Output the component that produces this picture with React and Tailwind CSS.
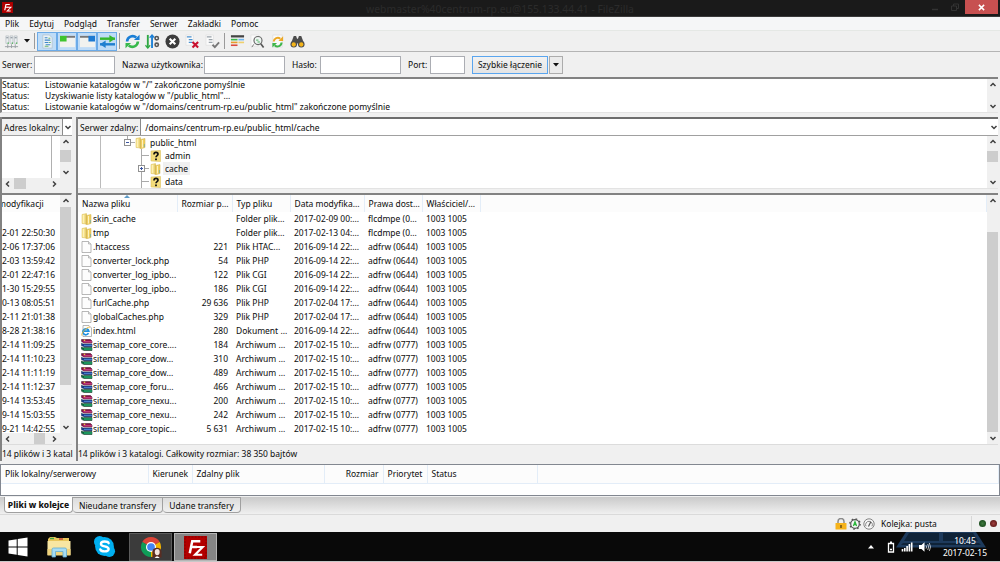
import React from 'react';

const menus = ['Plik', 'Edytuj', 'Podgląd', 'Transfer', 'Serwer', 'Zakładki', 'Pomoc'];

const logs = [
  'Listowanie katalogów w "/" zakończone pomyślnie',
  'Uzyskiwanie listy katalogów w "/public_html"...',
  'Listowanie katalogów w "/domains/centrum-rp.eu/public_html" zakończone pomyślnie',
];

const localDates = [
  '', '2-01 22:50:30', '2-06 17:37:06', '2-03 13:59:42', '2-01 22:47:16', '1-30 15:29:55',
  '0-13 08:05:51', '2-11 21:01:38', '8-28 21:38:16', '2-14 11:09:25', '2-14 11:10:23',
  '2-14 11:11:19', '2-14 11:12:37', '9-14 13:53:45', '9-14 15:03:55', '9-21 14:42:55',
];

const files = [
  ['folder', 'skin_cache', '', 'Folder plik...', '2017-02-09 00:...', 'flcdmpe (0...'],
  ['folder', 'tmp', '', 'Folder plik...', '2017-02-13 04:...', 'flcdmpe (0...'],
  ['file', '.htaccess', '221', 'Plik HTAC...', '2016-09-14 22:...', 'adfrw (0644)'],
  ['file', 'converter_lock.php', '54', 'Plik PHP', '2016-09-14 22:...', 'adfrw (0644)'],
  ['file', 'converter_log_ipbo...', '122', 'Plik CGI', '2016-09-14 22:...', 'adfrw (0644)'],
  ['file', 'converter_log_ipbo...', '186', 'Plik CGI', '2016-09-14 22:...', 'adfrw (0644)'],
  ['file', 'furlCache.php', '29 636', 'Plik PHP', '2017-02-04 17:...', 'adfrw (0644)'],
  ['file', 'globalCaches.php', '329', 'Plik PHP', '2017-02-04 17:...', 'adfrw (0644)'],
  ['html', 'index.html', '280', 'Dokument ...', '2016-09-14 22:...', 'adfrw (0644)'],
  ['rar', 'sitemap_core_core....', '184', 'Archiwum ...', '2017-02-15 10:...', 'adfrw (0777)'],
  ['rar', 'sitemap_core_dow...', '310', 'Archiwum ...', '2017-02-15 10:...', 'adfrw (0777)'],
  ['rar', 'sitemap_core_dow...', '489', 'Archiwum ...', '2017-02-15 10:...', 'adfrw (0777)'],
  ['rar', 'sitemap_core_foru...', '466', 'Archiwum ...', '2017-02-15 10:...', 'adfrw (0777)'],
  ['rar', 'sitemap_core_nexu...', '200', 'Archiwum ...', '2017-02-15 10:...', 'adfrw (0777)'],
  ['rar', 'sitemap_core_nexu...', '242', 'Archiwum ...', '2017-02-15 10:...', 'adfrw (0777)'],
  ['rar', 'sitemap_core_topic...', '5 631', 'Archiwum ...', '2017-02-15 10:...', 'adfrw (0777)'],
];

/* ---------- icons ---------- */

const FzLogo = ({ className }) => (
  <svg viewBox="0 0 24 24" className={className}>
    <rect width="24" height="24" fill="#b30000" />
    <rect x="1" y="1" width="22" height="22" fill="none" stroke="#7d0000" strokeDasharray="2 1.4" />
    <path d="M6 18 8.6 5.5H17M7.4 11.5H13.5" fill="none" stroke="#fff" strokeWidth="2.6" />
    <path d="M12 11.5H19.5L11.5 19.5H19" fill="none" stroke="#fff" strokeWidth="2.2" />
  </svg>
);

const Folder = () => (
  <svg viewBox="0 0 12 12" className="size-3 shrink-0">
    <path d="M1 1.5 5.5.5V11L1 10.5Z" fill="#f6e28a" stroke="#d9bd55" strokeWidth=".5" />
    <path d="M5.5 2.5 10 1.5V10.5L5.5 11.8Z" fill="#f0d062" stroke="#cfae45" strokeWidth=".5" />
    <path d="M5 1v10.5" stroke="#c9a94a" strokeWidth=".6" />
    <path d="M2.3 2v8M7.5 3v7.5" stroke="#fff6c8" strokeWidth=".9" />
    <path d="M9.4 7v3" stroke="#7fb0a0" strokeWidth=".9" />
  </svg>
);

const UnknownFolder = () => (
  <svg viewBox="0 0 12 12" className="size-3 shrink-0">
    <path d="M1 1 10.5.5V11.5L1 11Z" fill="#f3dc7b" stroke="#d6b950" strokeWidth=".5" />
    <path d="M4 4.4C4 2.8 5 2.3 6 2.3S8 3 8 4.2C8 5.6 6 5.7 6 7.3" fill="none" stroke="#111" strokeWidth="1.7" />
    <rect x="5.1" y="8.5" width="1.8" height="1.7" fill="#111" />
  </svg>
);

const Page = () => (
  <svg viewBox="0 0 12 12" className="size-3 shrink-0">
    <path d="M1 .5H7.5L10 3V11.5H1Z" fill="#fdfdfd" stroke="#9a9a9a" strokeWidth=".7" />
    <path d="M7.5 .5V3H10" fill="#e4e4e4" stroke="#9a9a9a" strokeWidth=".6" />
  </svg>
);

const HtmlPage = () => (
  <svg viewBox="0 0 12 12" className="size-3 shrink-0">
    <path d="M2 .5H8L10.500 3V11.500H2Z" fill="#fdfdfd" stroke="#999" strokeWidth=".7" />
    <path d="M7.500 8.200A3 3 0 1 1 7.800 6.200H2.300" fill="none" stroke="#1e8fe0" strokeWidth="1.700" />
    <path d="M.8 10.500C0 8.500 5 2 9 2" fill="none" stroke="#f2b52a" strokeWidth=".9" />
  </svg>
);

const Rar = () => (
  <svg viewBox="0 0 12 12" className="size-3 shrink-0">
    <path d="M.5 .5H9.500L11 2V4H2.500L.5 2.500Z" fill="#8c1247" stroke="#3a0820" strokeWidth=".5" />
    <path d="M2.500 2.900H11" stroke="#e05a9c" strokeWidth="1" />
    <path d="M.5 4.200 2.500 5H11V7.700H2.500L.5 6.700Z" fill="#1b3f8c" stroke="#0c1e4a" strokeWidth=".5" />
    <path d="M3 6.300H11" stroke="#4f8ae0" strokeWidth="1" />
    <path d="M.5 8 2.500 8.600H11V11.500H2.500L.5 10.300Z" fill="#0b6a3e" stroke="#062e1b" strokeWidth=".5" />
    <path d="M3 10H11" stroke="#2fc47e" strokeWidth="1" />
    <path d="M.5 3.300 2.500 4.500M.5 7.300 2.500 8.200M.5 10.900 2.500 11.700" stroke="#ddd" strokeWidth=".7" />
    <path d="M3.500 .6V2" stroke="#e5c64a" strokeWidth="1.500" />
  </svg>
);

const fileIcons = { folder: Folder, file: Page, html: HtmlPage, rar: Rar };

const Tool = ({ label, children, active }) => (
  <button
    aria-label={label}
    className={active
      ? 'flex w-5 h-[19px] items-center justify-center border border-[#6cabe8] bg-[#bfdcf7]'
      : 'flex w-5 h-[18px] items-center justify-center'}
  >
    <svg viewBox="0 0 16 16" className="size-[15px]">{children}</svg>
  </button>
);

const Separator = () => <div className="w-px h-4 mx-[2px] bg-[#9a9a9a]" />;

const Chevron = ({ dir }) => {
  const paths = { up: 'M1.5 5 4 2.5 6.5 5', down: 'M1.5 3 4 5.5 6.5 3', left: 'M5 1.5 2.5 4 5 6.5', right: 'M3 1.5 5.5 4 3 6.5' };
  return (
    <svg viewBox="0 0 8 8" className="size-2">
      <path d={paths[dir]} fill="none" stroke="#404040" strokeWidth="1.5" />
    </svg>
  );
};

const Caret = () => (
  <svg viewBox="0 0 6 4" className="w-[6px] h-1"><path d="M0 0H6L3 3.5Z" fill="#111" /></svg>
);

/* before / thumb / after are the shares of the track */
const VScroll = ({ before = 0, thumb = 0, after = 0 }) => (
  <div className="flex flex-col w-[11px] shrink-0 bg-[#f0f0f0]">
    <button aria-label="W górę" className="flex h-3 shrink-0 items-center justify-center"><Chevron dir="up" /></button>
    <div className="flex flex-1 flex-col">
      <div style={{ flexGrow: before }} />
      <div className="bg-[#cdcdcd]" style={{ flexGrow: thumb }} />
      <div style={{ flexGrow: after }} />
    </div>
    <button aria-label="W dół" className="flex h-3 shrink-0 items-center justify-center"><Chevron dir="down" /></button>
  </div>
);

const HScroll = ({ before, thumb, after }) => (
  <div className="flex h-[11px] shrink-0 bg-[#f0f0f0] pr-[11px]">
    <button aria-label="W lewo" className="flex w-3 items-center justify-center"><Chevron dir="left" /></button>
    <div className="flex flex-1">
      <div style={{ flexGrow: before }} />
      <div className="bg-[#cdcdcd]" style={{ flexGrow: thumb }} />
      <div style={{ flexGrow: after }} />
    </div>
    <button aria-label="W prawo" className="flex w-3 items-center justify-center"><Chevron dir="right" /></button>
  </div>
);

/* ---------- window parts ---------- */

const TitleBar = () => (
  <header className="relative flex h-[17px] shrink-0 items-start justify-between bg-[#1a1a1a] border-b border-[#3a3a3a]">
    <FzLogo className="size-[11px] mt-[2px] ml-[2px]" />
    <h1 className="absolute inset-x-0 top-0 text-center text-[11px] leading-[17px] text-[#2b2b2b]">webmaster%40centrum-rp.eu@155.133.44.41 - FileZilla</h1>
    <div className="relative flex mr-[2px]">
      <button aria-label="Minimalizuj" className="flex w-5 h-[14px] items-center justify-center">
        <svg viewBox="0 0 8 8" className="size-2"><path d="M1 6.5H7" stroke="#333" strokeWidth="1.5" /></svg>
      </button>
      <button aria-label="Przywróć" className="flex w-5 h-[14px] items-center justify-center">
        <svg viewBox="0 0 8 8" className="size-2"><path d="M.5 3H5.5V7.5H.5ZM2.5 3V1H7.5V5.5H5.5" fill="none" stroke="#333" /></svg>
      </button>
      <button aria-label="Zamknij" className="flex w-[33px] h-[14px] items-center justify-center bg-[#c75050]">
        <svg viewBox="0 0 8 8" className="size-[7px]"><path d="M1 1 7 7M7 1 1 7" stroke="#fff" strokeWidth="1.7" /></svg>
      </button>
    </div>
  </header>
);

const Toolbar = () => (
  <div className="flex h-[21px] shrink-0 items-center bg-[#f0f0f0] border-b border-[#b4b4b4] pl-[1px]">
    <Tool label="Menedżer stron">
      <path d="M1 13.5H15M4 11V15M8 11V15M12 11V15" stroke="#9aa0a4" />
      <path d="M2 2H5V10H2ZM6.5 2H9.5V10H6.5ZM11 2H14V10H11Z" fill="#e9edf0" stroke="#b3babf" strokeWidth=".7" />
      <path d="M2.5 4H4.5M7 4H9M11.5 4H13.5" stroke="#76808a" />
      <path d="M4.5 9V10.5M9 9V10.5M13.5 9V10.5" stroke="#3fae49" strokeWidth="1.3" />
    </Tool>
    <button aria-label="Lista stron" className="flex w-[11px] h-4 items-center justify-center"><Caret /></button>
    <Separator />
    <div className="flex">
      <Tool label="Dziennik zdarzeń" active>
        <path d="M3 1H10L13 4V15H3Z" fill="#e9f1f6" stroke="#b5c9d8" />
        <path d="M5 4H8M5 6.5H11M5 9H9M6 11.5H11" stroke="#3f87c9" strokeWidth="1.2" />
        <path d="M9 4.5H11M9.5 9H11.500M5 13H9" stroke="#6cb66c" strokeWidth="1.2" />
      </Tool>
      <Tool label="Drzewo lokalne" active>
        <rect x="0" y="2" width="16" height="12" fill="#f1f2ef" />
        <path d="M0 3H16" stroke="#777" strokeWidth="2" /><rect y="2" width="7" height="6" fill="#3fc42f" />
      </Tool>
      <Tool label="Drzewo zdalne" active>
        <rect x="0" y="2" width="16" height="12" fill="#f1f2ef" />
        <path d="M0 3H16" stroke="#777" strokeWidth="2" /><rect x="9" y="2" width="7" height="6" fill="#1c79d2" />
      </Tool>
      <Tool label="Kolejka" active>
        <path d="M0 5H16" stroke="#35b82e" strokeWidth="2.6" />
        <path d="M10 1 16 5 10 9Z" fill="#35b82e" />
        <path d="M0 11H16" stroke="#1f7fd0" strokeWidth="2.6" /><path d="M6 7 0 11 6 15Z" fill="#1f7fd0" />
      </Tool>
    </div>
    <Separator />
    <Tool label="Odśwież">
      <path d="M2.2 8A6 6 0 0 1 12 3.7" fill="none" stroke="#1b7fd6" strokeWidth="2.8" />
      <path d="M9.5 6.5H15.5V.8Z" fill="#1b7fd6" />
      <path d="M13.8 8A6 6 0 0 1 4 12.3" fill="none" stroke="#37b84a" strokeWidth="2.8" />
      <path d="M6.5 9.5H.5V15.2Z" fill="#37b84a" />
    </Tool>
    <Tool label="Przetwarzaj kolejkę">
      <path d="M3 1V15" stroke="#30a843" strokeWidth="2" /><path d="M7.5 1V15" stroke="#1b7fd6" strokeWidth="2" />
      <path d="M.5 12 3 15 5.5 12" fill="none" stroke="#30a843" strokeWidth="1.3" />
      <path d="M5 4 7.5 1 10 4" fill="none" stroke="#1b7fd6" strokeWidth="1.3" />
      <circle cx="12.5" cy="4.5" r="1.800" fill="none" stroke="#555" strokeWidth="1.700" />
      <circle cx="12.5" cy="11.5" r="1.800" fill="none" stroke="#555" strokeWidth="1.700" />
    </Tool>
    <Tool label="Anuluj">
      <circle cx="8" cy="8" r="7.5" fill="#3c3c3c" />
      <path d="M5 5 11 11M11 5 5 11" stroke="#fff" strokeWidth="2.2" />
    </Tool>
    <Tool label="Rozłącz">
      <path d="M1 1H9V12H1Z" fill="#fafafa" stroke="#e4e4e4" />
      <path d="M2 3H7M4 6H8M4 9H8" stroke="#4c92cf" strokeWidth="1.3" />
      <path d="M8 8.5 14 14.5M14 8.5 8 14.5" stroke="#c8102e" strokeWidth="2.2" />
    </Tool>
    <Tool label="Połącz ponownie">
      <path d="M1 1H9V12H1Z" fill="#fafafa" stroke="#e4e4e4" />
      <path d="M2 3H7M4 6H8M4 9H8" stroke="#9aa3aa" strokeWidth="1.3" />
      <path d="M8 11.5 10.5 14 15 9" fill="none" stroke="#777" strokeWidth="2" />
    </Tool>
    <Separator />
    <Tool label="Filtry">
      <path d="M1 2.5H15" stroke="#444" strokeWidth="2.4" />
      <path d="M1 6H8" stroke="#37b84a" strokeWidth="1.7" /><path d="M9 6H15" stroke="#6db4ef" strokeWidth="1.7" />
      <path d="M1 9H8" stroke="#e89c2a" strokeWidth="1.7" /><path d="M9 9H15" stroke="#efd06d" strokeWidth="1.7" />
      <path d="M1 12H8" stroke="#db4a3d" strokeWidth="1.7" />
    </Tool>
    <Tool label="Porównanie katalogów">
      <path d="M1 1H9V13H1Z" fill="#fafafa" stroke="#e4e4e4" />
      <circle cx="8.5" cy="7" r="4.3" fill="#eef5f2" stroke="#666" strokeWidth="1.2" />
      <path d="M6.5 6.5H9M8 8.500H10.5" stroke="#41aa55" strokeWidth="1" />
      <path d="M11.5 10.5 14.5 14.5" stroke="#555" strokeWidth="1.8" /><path d="M2 14 4 11" stroke="#777" />
    </Tool>
    <Tool label="Przeglądanie synchroniczne">
      <path d="M3 1H13V14H3Z" fill="#fafafa" stroke="#e2e2e2" />
      <path d="M4 8A4.3 4.3 0 0 1 11 5" fill="none" stroke="#eca825" strokeWidth="2.2" /><path d="M9 7.5H14V2.5Z" fill="#eca825" />
      <path d="M12.3 9A4.3 4.3 0 0 1 5 12" fill="none" stroke="#3fb54b" strokeWidth="2.2" /><path d="M7.5 9.5H2.5V14.5Z" fill="#3fb54b" />
    </Tool>
    <Tool label="Szukaj plików">
      <path d="M4 2H6.5L7.5 5H8.5L9.5 2H12L15 10H1Z" fill="#4d4d4d" />
      <circle cx="4" cy="11" r="3.5" fill="#4d4d4d" /><circle cx="12" cy="11" r="3.5" fill="#4d4d4d" />
      <circle cx="4" cy="11.2" r="2.3" fill="#f4b41a" /><circle cx="12" cy="11.2" r="2.3" fill="#f4b41a" />
    </Tool>
  </div>
);

const QuickConnect = () => (
  <form className="flex h-[25px] shrink-0 items-center bg-[#f0f0f0] pl-[2px]">
    <label htmlFor="host" className="w-8">Serwer:</label>
    <input id="host" className="w-[81px] h-[18px] bg-white border border-[#abadb3]" />
    <label htmlFor="user" className="w-[82px] ml-[7px]">Nazwa użytkownika:</label>
    <input id="user" className="w-[81px] h-[18px] bg-white border border-[#abadb3]" />
    <label htmlFor="pass" className="w-7 ml-[7px]">Hasło:</label>
    <input id="pass" type="password" className="w-[81px] h-[18px] bg-white border border-[#abadb3]" />
    <label htmlFor="port" className="w-[22px] ml-[7px]">Port:</label>
    <input id="port" className="w-[35px] h-[18px] bg-white border border-[#abadb3]" />
    <button type="button" className="w-[76px] h-[18px] ml-[7px] border border-[#5aa5ee] bg-linear-to-b from-[#f2f2f2] to-[#e4e4e4]">Szybkie łączenie</button>
    <button type="button" aria-label="Historia" className="flex w-[14px] h-[18px] ml-px items-center justify-center border border-[#acacac] bg-[#ebebeb]"><Caret /></button>
  </form>
);

const MessageLog = () => (
  <section className="flex h-9 shrink-0 bg-white border-t-2 border-l-2 border-b border-t-[#828282] border-l-[#828282] border-b-[#e3e3e3] mr-[2px]">
    <div className="flex-1">
      {logs.map((l) => (
        <div key={l} className="flex h-[11px] items-center"><span className="w-[43px]">Status:</span><span>{l}</span></div>
      ))}
    </div>
    <VScroll />
  </section>
);

const Pane = ({ label, id, value, tree, list, status, className }) => (
  <section className={className}>
    <div className="flex h-[19px] shrink-0 items-stretch bg-white border-t-2 border-b border-t-[#6d6d6d] border-b-[#a0a0a0]">
      <label htmlFor={id} className="flex items-center shrink-0 px-[2px] bg-[#f0f0f0] border-r border-[#8a8a8a] whitespace-nowrap">{label}</label>
      <input id={id} defaultValue={value} className="flex-1 min-w-0 indent-1 bg-white" />
      <button aria-label="Rozwiń" className="flex w-[9px] shrink-0 items-center justify-center"><Chevron dir="down" /></button>
    </div>
    {tree}
    {list}
    <div className="flex h-[17px] shrink-0 items-center bg-[#f0f0f0] border-t border-[#dcdcdc] whitespace-nowrap">{status}</div>
  </section>
);

const LocalPane = () => (
  <Pane
    className="flex flex-col w-[72px] shrink-0 border-l-2 border-[#828282]"
    id="local" label="Adres lokalny:" value="" status="14 plików i 3 katal"
    tree={(
      <div className="flex flex-col h-[53px] shrink-0 bg-white border-r border-[#f0f0f0]">
        <div className="flex flex-1">
          <div className="flex-1 mr-2 border-r border-[#b0b0b0]" />
          <VScroll before={2} thumb={12} after={4} />
        </div>
        <HScroll before={0} thumb={12} after={23} />
      </div>
    )}
    list={(
      <div className="flex flex-col flex-1 min-h-0 mt-1 bg-white border-t-2 border-r border-t-[#828282] border-r-[#f0f0f0]">
        <div className="flex flex-1 min-h-0">
          <div className="flex-1 overflow-hidden">
            <table className="w-full">
              <thead>
                <tr className="bg-[#fcfcfc]"><th className="block -ml-1 h-[17px] p-0 text-left font-normal leading-[17px]">modyfikacji</th></tr>
              </thead>
              <tbody>
                {localDates.map((d, i) => (
                  <tr key={i} className="h-[14px]"><td className="p-0 whitespace-nowrap leading-[14px]">{d}</td></tr>
                ))}
              </tbody>
            </table>
          </div>
          <VScroll before={0} thumb={176} after={36} />
        </div>
        <HScroll before={21} thumb={11} after={3} />
      </div>
    )}
  />
);

const TreeRow = ({ icon: Icon, name, parent, expandable, selected }) => (
  <div className="flex h-[13px] items-center">
    <svg viewBox="0 0 72 13" className={parent ? 'w-[57px] h-[13px]' : 'w-[72px] h-[13px]'} preserveAspectRatio="xMinYMin slice">
      <path d="M22.5 0V13" stroke="#bbb" />
      {parent && <path d="M49.5 0V3M53 6.5H57" stroke="#aaa" />}
      {!parent && <path d="M63.5 0V13M64 6.5H71" stroke="#aaa" />}
      {parent && <><rect x="46.5" y="3.5" width="6" height="6" fill="#fff" stroke="#919191" /><path d="M48 6.5H51" stroke="#3b55a0" /></>}
      {expandable && <><rect x="60.5" y="3.5" width="6" height="6" fill="#fff" stroke="#919191" /><path d="M62 6.5H65M63.5 5V8" stroke="#3b55a0" /></>}
    </svg>
    <Icon />
    <span className={selected ? 'ml-px px-[2px] leading-[13px] bg-[#f0f0f0]' : 'ml-px px-[2px] leading-[13px]'}>{name}</span>
  </div>
);

const RemotePane = () => (
  <Pane
    className="flex flex-col flex-1 min-w-0 border-l-2 border-[#828282]"
    id="remote" label="Serwer zdalny:" value="/domains/centrum-rp.eu/public_html/cache"
    status="14 plików i 3 katalogi. Całkowity rozmiar: 38 350 bajtów"
    tree={(
      <div className="flex h-[53px] shrink-0 bg-white border-b border-[#e3e3e3]">
        <div className="flex-1 overflow-hidden">
          <TreeRow parent icon={Folder} name="public_html" />
          <TreeRow icon={UnknownFolder} name="admin" />
          <TreeRow expandable selected icon={Folder} name="cache" />
          <TreeRow icon={UnknownFolder} name="data" />
        </div>
        <VScroll before={3} thumb={12} after={14} />
      </div>
    )}
    list={(
      <div className="flex flex-1 min-h-0 mt-1 bg-white border-t-2 border-[#828282]">
        <div className="flex-1 min-w-0 overflow-hidden">
          <table className="w-full table-fixed text-left">
            <colgroup>
              <col className="w-[99px]" /><col className="w-[55px]" /><col className="w-[58px]" /><col className="w-[74px]" />
              <col className="w-[58px]" /><col className="w-[58px]" /><col />
            </colgroup>
            <thead>
              <tr className="h-[17px] bg-[#fcfcfc] whitespace-nowrap *:border-r *:border-[#e3edf8] *:font-normal *:p-0 *:pl-1">
                <th className="relative">
                  Nazwa pliku
                  <svg viewBox="0 0 6 3" className="absolute top-0 left-[46px] w-[6px] h-[3px]"><path d="M0 3 3 0 6 3Z" fill="#5d9bc8" /></svg>
                </th>
                <th>Rozmiar p...</th><th>Typ pliku</th><th>Data modyfika...</th><th>Prawa dost...</th><th>Właściciel/...</th><td />
              </tr>
            </thead>
            <tbody>
              {files.map(([type, name, size, kind, date, perms], i) => {
                const Icon = fileIcons[type];
                return (
                  <tr key={i} className="h-[14px] whitespace-nowrap leading-[14px] *:p-0 *:pl-1">
                    <td><div className="flex items-center -ml-px"><Icon />{name}</div></td>
                    <td><div className="pr-1 text-right">{size}</div></td>
                    <td>{kind}</td>
                    <td>{date}</td>
                    <td>{perms}</td>
                    <td>1003 1005</td>
                    <td />
                  </tr>
                );
              })}
            </tbody>
          </table>
        </div>
        <VScroll before={25} thumb={198} after={0} />
      </div>
    )}
  />
);

const Queue = () => (
  <section className="h-8 shrink-0 bg-white border border-[#828790]">
    <table className="w-full table-fixed text-left">
      <colgroup>
        <col className="w-[147px]" /><col className="w-11" /><col className="w-[132px]" /><col className="w-[59px]" />
        <col className="w-11" /><col className="w-[110px]" /><col />
      </colgroup>
      <thead>
        <tr className="h-[18px] bg-[#fcfcfc] border-b border-[#e3edf8] whitespace-nowrap *:border-r *:border-[#e3edf8] *:font-normal *:p-0 *:pl-1">
          <th>Plik lokalny/serwerowy</th><th>Kierunek</th><th>Zdalny plik</th>
          <th><div className="pr-1 text-right">Rozmiar</div></th><th>Priorytet</th><th>Status</th><td />
        </tr>
      </thead>
    </table>
  </section>
);

const QueueTabs = () => (
  <nav className="flex h-[19px] shrink-0 items-start bg-linear-to-b from-[#cacaca] to-[#f0f0f0] border-t border-b border-t-[#f0f0f0] border-b-[#dadada] pl-1">
    <button className="w-[69px] h-4 bg-white border border-t-0 border-[#a0a0a0] rounded-b-sm font-bold">Pliki w kolejce</button>
    <button className="w-[90px] h-4 bg-linear-to-b from-[#dcdcdc] to-[#f0f0f0] border border-l-0 border-[#a0a0a0] rounded-b-sm">Nieudane transfery</button>
    <button className="w-[78px] h-4 bg-linear-to-b from-[#dcdcdc] to-[#f0f0f0] border border-l-0 border-[#a0a0a0] rounded-b-sm">Udane transfery</button>
  </nav>
);

const StatusBar = () => (
  <footer className="flex h-[17px] shrink-0 items-center justify-end bg-[#f0f0f0] pr-[3px]">
    <svg viewBox="0 0 12 12" className="size-3">
      <path d="M3 6V3.5A3 3 0 0 1 9 3.5V6" fill="none" stroke="#8b8b8b" strokeWidth="1.5" />
      <rect x=".5" y="5" width="11" height="6.5" rx=".6" fill="#f6b31b" /><path d="M6 7V10" stroke="#5a4210" strokeWidth="1.3" />
    </svg>
    <svg viewBox="0 0 12 12" className="size-3 ml-[2px]">
      <circle cx="6" cy="6" r="4.3" fill="#f5f5f5" stroke="#555" strokeWidth="1.2" />
      <circle cx="6" cy="6" r="5.2" fill="none" stroke="#555" strokeWidth="1.3" strokeDasharray="1.6 2.48" />
      <path d="M4.4 8 6 3.8 7.6 8M5 6.7H7" fill="none" stroke="#27b537" strokeWidth="1.2" />
    </svg>
    <svg viewBox="0 0 12 12" className="size-3 ml-[2px]">
      <circle cx="6" cy="6" r="5.2" fill="#f5f5f5" stroke="#777" strokeWidth=".9" />
      <path d="M3 8.3A3.4 3.4 0 1 1 9 8.3" fill="none" stroke="#888" strokeWidth="1" />
      <path d="M5.5 8.5 7.8 3.8" stroke="#555" strokeWidth="1.2" />
    </svg>
    <span className="w-[91px] ml-[6px] border-r border-[#d7d7d7] leading-[15px]">Kolejka: pusta</span>
    <span className="size-[7px] ml-[7px] rounded-full bg-radial from-[#3f7a3f] to-[#0c3a10]" />
    <span className="size-[7px] ml-1 rounded-full bg-radial from-[#a04040] to-[#4a0a0a]" />
  </footer>
);

const Taskbar = () => (
  <div className="relative flex h-[30px] shrink-0 items-stretch bg-[#090909] border-b border-[#c8c8c8] text-white">
    <svg viewBox="0 0 92 16" className="absolute top-0 right-[13px] w-[92px] h-4">
      <path d="M11 0H81L91 15.5H1Z" fill="#1d3a5c" />
      <path d="M14 1H44V9H9ZM48 1H78L83 9H48ZM8 11H84L86 13H6Z" fill="#0f2338" />
    </svg>
    <button aria-label="Start" className="flex w-9 items-center justify-center">
      <svg viewBox="0 0 20 20" className="size-5"><path d="M.5 3.5 8.7 2.3V9.5H.5ZM9.7 2.1 19.5.6V9.5H9.7ZM.5 10.5H8.7V17.7L.5 16.5ZM9.7 10.5H19.5V19.4L9.7 17.9Z" fill="#fff" /></svg>
    </button>
    <button aria-label="Eksplorator" className="flex w-[46px] items-center justify-center">
      <svg viewBox="0 0 26 24" className="w-[26px] h-6">
        <path d="M2 4 4 2H9L11 3H23V7H2Z" fill="#e8c65c" /><path d="M4 3.5H8" stroke="#3fa648" strokeWidth="1.4" /><path d="M13 4H17" stroke="#c93c35" strokeWidth="1.4" />
        <path d="M1.5 6H24.5V20H1.5Z" fill="#f8e6a2" /><path d="M1.5 14H24.5V20.5H1.5Z" fill="#efd27b" />
        <path d="M6 22V14.5Q6 13 7.5 13H19Q20.5 13 20.5 14.5V22H17V16.5H9.5V22Z" fill="#a6dcf4" stroke="#5fa9d0" strokeWidth=".8" />
      </svg>
    </button>
    <button aria-label="Skype" className="flex w-[45px] items-center justify-center">
      <svg viewBox="0 0 24 24" className="size-[23px]">
        <circle cx="12" cy="12" r="9.8" fill="#00aff0" /><circle cx="7" cy="7" r="6" fill="#00aff0" /><circle cx="17" cy="17" r="6" fill="#00aff0" />
        <path d="M16.3 8.5C15.5 6.5 8.3 5.8 8.3 9.3C8.3 12.8 16.3 10.8 16.3 14.6C16.3 18.3 8.3 17.5 7.6 15" fill="none" stroke="#fff" strokeWidth="2.5" strokeLinecap="round" />
      </svg>
    </button>
    <button aria-label="Chrome" className="flex w-[43px] ml-[2px] mt-px items-center justify-center bg-[#3b3b3b] border border-[#5c5c5c]">
      <svg viewBox="0 0 24 24" className="size-[22px]">
        <path d="M12 12 2.5 6.5A11 11 0 0 1 21.5 6.5Z" fill="#db4437" />
        <path d="M12 12 21.5 6.5A11 11 0 0 1 12 23Z" fill="#f4b400" />
        <path d="M12 12V23A11 11 0 0 1 2.5 6.5Z" fill="#0f9d58" />
        <circle cx="12" cy="12" r="5.5" fill="#fff" /><circle cx="12" cy="12" r="4.2" fill="#4285f4" />
        <path d="M13.5 23.500V17C13.5 11.500 23.500 11.500 23.500 17V23.500Z" fill="#5a2d22" /><ellipse cx="18.8" cy="17.5" rx="2.700" ry="3.400" fill="#f4e4dc" /><path d="M16 24Q18.5 20 21.5 24Z" fill="#fff" />
      </svg>
    </button>
    <button aria-label="FileZilla" className="flex w-[43px] ml-[2px] mt-px items-center justify-center bg-[#858585] border border-[#b5b5b5]">
      <FzLogo className="size-[23px]" />
    </button>
    <div className="relative flex flex-1 items-center justify-end pr-[13px]">
      <svg viewBox="0 0 6 4" className="w-[6px] h-1 mr-[13px]"><path d="M0 3.5H6L3 0Z" fill="#fff" /></svg>
      <svg viewBox="0 0 8 12" className="w-2 h-3 mr-[6px]"><path d="M1.5 2.5H6.5V11H1.5ZM3 1.2H5" fill="none" stroke="#fff" strokeWidth="1.3" /><path d="M3 8.5H5" stroke="#fff" strokeWidth="1.5" /></svg>
      <svg viewBox="0 0 12 10" className="w-3 h-[10px] mr-[6px]"><path d="M1.5 7V9.5M3.8 6V9.5M6.1 4V9.5M8.4 2V9.5M10.7 .5V9.5" stroke="#fff" strokeWidth="1.6" /></svg>
      <svg viewBox="0 0 12 10" className="w-3 h-[10px] mr-3">
        <path d="M0 3H2.5L5.5 .3V9.7L2.5 7H0Z" fill="#fff" /><path d="M7 3.3Q8.2 5 7 6.7M8.7 2Q10.7 5 8.7 8M10.3 1Q12.8 5 10.3 9" fill="none" stroke="#ddd" strokeWidth=".8" />
      </svg>
      <div className="text-center text-[9px] leading-3 whitespace-nowrap"><div>10:45</div><div>2017-02-15</div></div>
    </div>
  </div>
);

export default function App() {
  return (
    <div className="flex flex-col h-screen overflow-hidden bg-[#f0f0f0] font-['Noto_Sans_Display','Noto_Sans',sans-serif] text-[9px] leading-[11px] text-[#111]">
      <TitleBar />
      <nav className="flex h-[14px] shrink-0 items-center gap-[10px] pl-[5px] bg-[#f5f6f7] border-b border-[#e5e8e5]">
        {menus.map((m) => <button key={m}>{m}</button>)}
      </nav>
      <Toolbar />
      <QuickConnect />
      <MessageLog />
      <main className="flex flex-1 min-h-0 gap-1 mt-1 mb-[3px] mr-[2px]">
        <LocalPane />
        <RemotePane />
      </main>
      <Queue />
      <QueueTabs />
      <StatusBar />
      <Taskbar />
    </div>
  );
}
